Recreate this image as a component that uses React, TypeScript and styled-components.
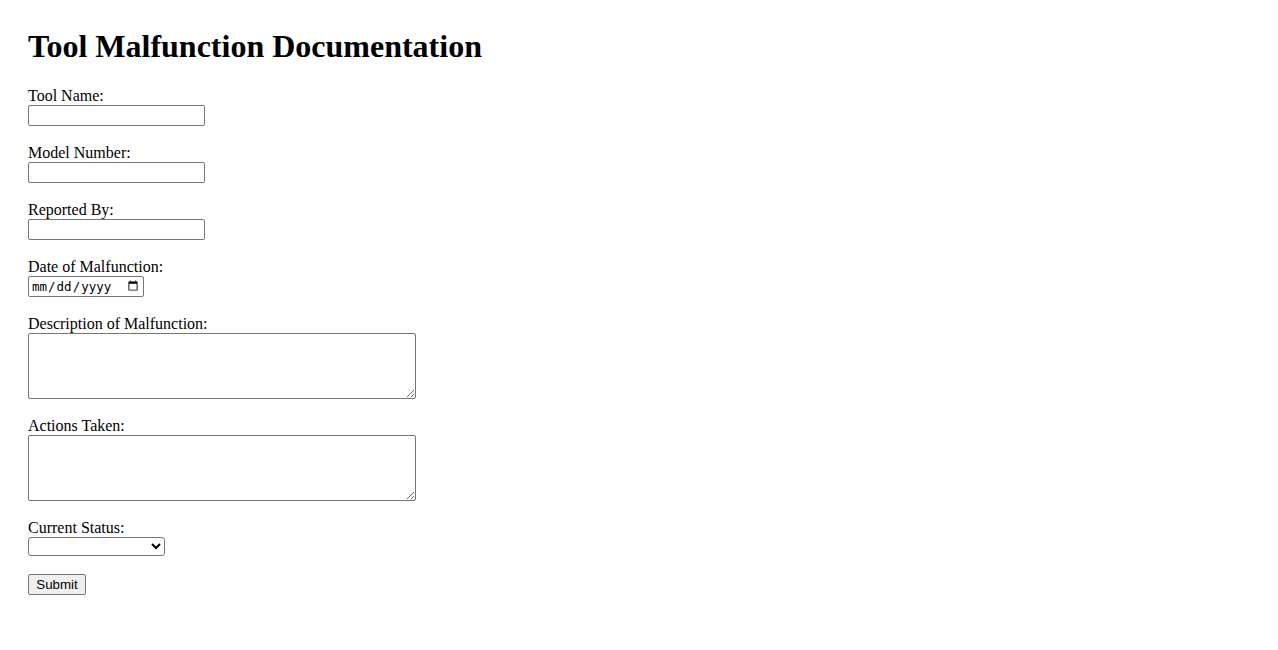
import { FC } from "react";
import styled, { createGlobalStyle } from "styled-components";

const GlobalStyle = createGlobalStyle`
  body {
    margin: 0;
    background: #ffffff;
    color: #000000;
    font-family: "Liberation Serif", "Times New Roman", serif;
    font-size: 16px;
  }
`;

const fields = [
  { id: "toolName", label: "Tool Name:", kind: "text" },
  { id: "modelNumber", label: "Model Number:", kind: "text" },
  { id: "reportedBy", label: "Reported By:", kind: "text" },
  { id: "date", label: "Date of Malfunction:", kind: "date" },
  { id: "description", label: "Description of Malfunction:", kind: "area" },
  { id: "actions", label: "Actions Taken:", kind: "area" },
  { id: "status", label: "Current Status:", kind: "select" },
];

const App: FC = () => {
  return (
    <>
      <GlobalStyle />
      <Page>
        <Title>Tool Malfunction Documentation</Title>
        <Form onSubmit={(e) => e.preventDefault()}>
          {fields.map(({ id, label, kind }) => (
            <Field key={id}>
              <Label htmlFor={id}>{label}</Label>
              {kind === "text" && <TextInput id={id} type="text" />}
              {kind === "date" && <DateInput id={id} type="date" />}
              {kind === "area" && <TextArea id={id} />}
              {kind === "select" && (
                <Select id={id} defaultValue="">
                  <option value=""></option>
                  <option value="operational">Operational</option>
                  <option value="repair">Under Repair</option>
                  <option value="retired">Out of Service</option>
                </Select>
              )}
            </Field>
          ))}
          <SubmitButton type="submit">Submit</SubmitButton>
        </Form>
      </Page>
    </>
  );
};

const Page = styled.main`
  padding: 28px;
`;

const Title = styled.h1`
  margin: 0 0 22px;
  font-size: 32px;
  font-weight: bold;
  line-height: 37px;
`;

const Form = styled.form`
  display: flex;
  flex-direction: column;
  align-items: flex-start;
`;

const Field = styled.div`
  display: flex;
  flex-direction: column;
  align-items: flex-start;
  margin-bottom: 18px;
`;

const Label = styled.label`
  display: block;
  line-height: 18px;
`;

const control = `
  box-sizing: border-box;
  margin: 0;
  border: 1px solid #767676;
  border-radius: 2px;
  background: #ffffff;
`;

const TextInput = styled.input`
  ${control}
  width: 177px;
  height: 21px;
  padding: 1px 2px;
`;

const DateInput = styled.input`
  ${control}
  width: 116px;
  height: 21px;
  padding: 1px 2px;
  font-family: "DejaVu Sans Mono", "Liberation Mono", monospace;
  font-size: 12.5px;
`;

const TextArea = styled.textarea`
  ${control}
  width: 388px;
  height: 66px;
  padding: 2px;
`;

const Select = styled.select`
  ${control}
  width: 137px;
  height: 19px;
  border-radius: 3px;
`;

const SubmitButton = styled.button`
  box-sizing: border-box;
  margin: 0;
  width: 58px;
  height: 21px;
  padding: 1px 6px;
  border: 1px solid #767676;
  border-radius: 2px;
  background: #efefef;
  font-family: "Liberation Sans", Arial, sans-serif;
  font-size: 13.33px;
  color: #000000;
`;

export default App;
